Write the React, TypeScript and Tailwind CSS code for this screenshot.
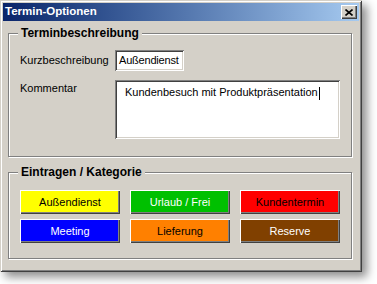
const raised =
  "shadow-[inset_1px_1px_0_#ffffff,inset_-1px_-1px_0_#404040,inset_-2px_-2px_0_#808080]";
const sunken =
  "shadow-[inset_1px_1px_0_#808080,inset_-1px_-1px_0_#ffffff,inset_2px_2px_0_#404040,inset_-2px_-2px_0_#d4d0c8]";

const categories = [
  { label: "Außendienst", className: "bg-[#ffff00] text-black" },
  { label: "Urlaub / Frei", className: "bg-[#00c000] text-white" },
  { label: "Kundentermin", className: "bg-[#ff0000] text-black" },
  { label: "Meeting", className: "bg-[#0000ff] text-white" },
  { label: "Lieferung", className: "bg-[#ff8000] text-black" },
  { label: "Reserve", className: "bg-[#804000] text-white" },
];

function GroupBox({
  title,
  classes = "",
  children,
}: {
  title: string;
  classes?: string;
  children: React.ReactNode;
}) {
  return (
    <div
      className={`relative ml-[5px] w-[344px] border border-[#808080] shadow-[inset_1px_1px_0_#ffffff,1px_1px_0_#ffffff] ${classes}`}
    >
      <span className="absolute -top-[9px] left-[9px] bg-[#d4d0c8] px-[3px] text-[12px] leading-[16px] font-bold text-black">
        {title}
      </span>
      {children}
    </div>
  );
}

export default function App() {
  return (
    <div className="w-[377px] h-[284px] bg-white font-['Liberation_Sans',Arial,sans-serif]">
      <div className="w-[362px] h-[272px] bg-[#d4d0c8] p-[3px] shadow-[inset_1px_1px_0_#d4d0c8,inset_-1px_-1px_0_#404040,inset_2px_2px_0_#ffffff,inset_-2px_-2px_0_#808080,5px_5px_9px_rgba(0,0,0,0.45)]">
        <div className="flex h-[18px] items-center justify-between bg-gradient-to-r from-[#0a246a] to-[#a6caf0] pl-[2px] pr-[2px]">
          <span className="text-[11.5px] font-bold text-white leading-none">
            Termin-Optionen
          </span>
          <button
            className={`flex h-[14px] w-[16px] items-center justify-center bg-[#d4d0c8] ${raised}`}
          >
            <svg width="8" height="7" viewBox="0 0 8 7">
              <path
                d="M0.5 0.5 L7.5 6.5 M7.5 0.5 L0.5 6.5"
                stroke="#000"
                strokeWidth="1.6"
              />
            </svg>
          </button>
        </div>

        <GroupBox title="Terminbeschreibung" classes="mt-[12px] h-[124px] pl-[11px] pt-[16px]">
          <div className="flex items-center text-[11px] text-black">
            <span className="w-[95px]">Kurzbeschreibung</span>
            <div className={`flex h-[21px] w-[69px] items-center bg-white pl-[4px] tracking-[-0.2px] ${sunken}`}>
              Außendienst
            </div>
          </div>
          <div className="mt-[9px] flex text-[11px] text-black">
            <span className="w-[95px]">Kommentar</span>
            <div className={`h-[59px] w-[225px] bg-white pl-[10px] pt-[4px] ${sunken}`}>
              <span>Kundenbesuch mit Produktpräsentation</span>
              <span className="ml-[1px] inline-block h-[13px] w-px bg-black align-middle" />
            </div>
          </div>
        </GroupBox>

        <GroupBox title="Eintragen / Kategorie" classes="mt-[15px] h-[87px] pl-[11px] pt-[17px]">
          <div className="grid grid-cols-[100px_100px_100px] gap-x-[10px] gap-y-[5px]">
            {categories.map((c) => (
              <button
                key={c.label}
                className={`h-[24px] text-[11px] ${c.className} ${raised}`}
              >
                {c.label}
              </button>
            ))}
          </div>
        </GroupBox>
      </div>
    </div>
  );
}
